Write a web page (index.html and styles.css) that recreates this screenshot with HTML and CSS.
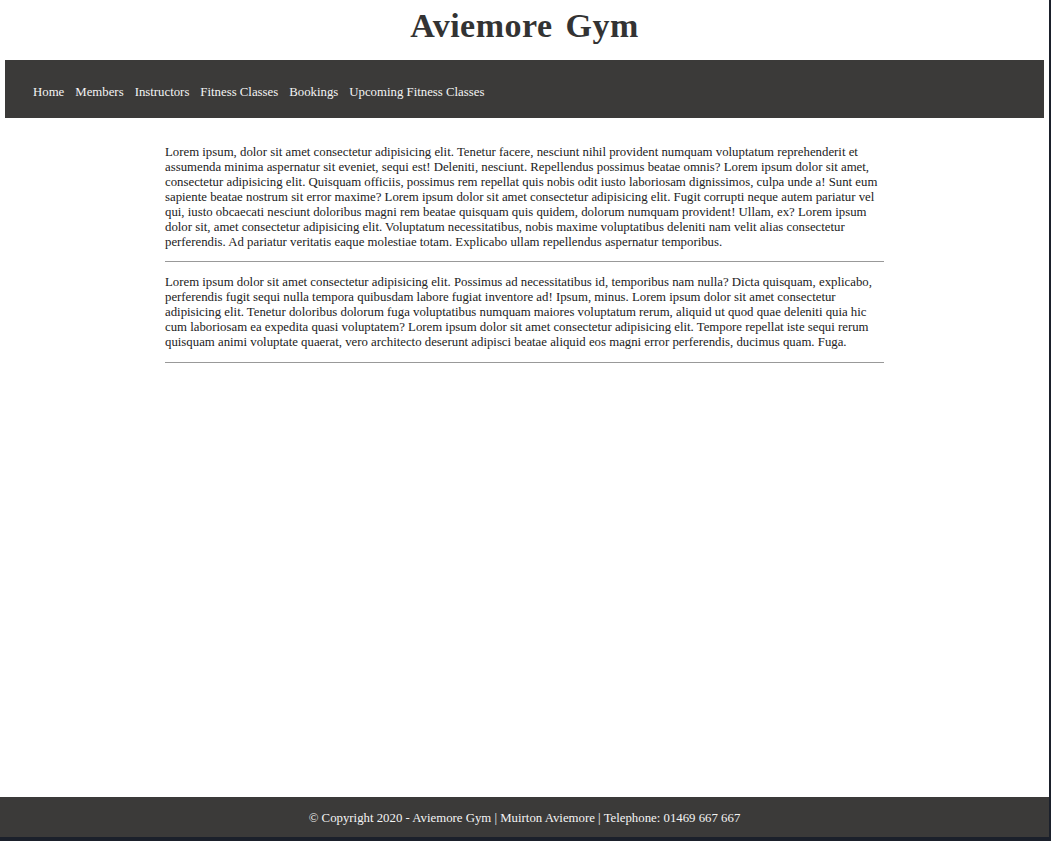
FILE: index.html
```html
<!DOCTYPE html>
<html lang="en">
<head>
<meta charset="utf-8">
<title>Aviemore Gym</title>
<link rel="stylesheet" href="styles.css">
</head>
<body>
<div class="page">
  <header class="site-header">
    <h1 class="site-title">Aviemore Gym</h1>
  </header>
  <nav class="main-nav">
    <a href="#">Home</a>
    <a href="#">Members</a>
    <a href="#">Instructors</a>
    <a href="#">Fitness Classes</a>
    <a href="#">Bookings</a>
    <a href="#">Upcoming Fitness Classes</a>
  </nav>
  <main class="content">
    <p>Lorem ipsum, dolor sit amet consectetur adipisicing elit. Tenetur facere, nesciunt nihil provident numquam voluptatum reprehenderit et assumenda minima aspernatur sit eveniet, sequi est! Deleniti, nesciunt. Repellendus possimus beatae omnis? Lorem ipsum dolor sit amet, consectetur adipisicing elit. Quisquam officiis, possimus rem repellat quis nobis odit iusto laboriosam dignissimos, culpa unde a! Sunt eum sapiente beatae nostrum sit error maxime? Lorem ipsum dolor sit amet consectetur adipisicing elit. Fugit corrupti neque autem pariatur vel qui, iusto obcaecati nesciunt doloribus magni rem beatae quisquam quis quidem, dolorum numquam provident! Ullam, ex? Lorem ipsum dolor sit, amet consectetur adipisicing elit. Voluptatum necessitatibus, nobis maxime voluptatibus deleniti nam velit alias consectetur perferendis. Ad pariatur veritatis eaque molestiae totam. Explicabo ullam repellendus aspernatur temporibus.</p>
    <hr class="divider">
    <p>Lorem ipsum dolor sit amet consectetur adipisicing elit. Possimus ad necessitatibus id, temporibus nam nulla? Dicta quisquam, explicabo, perferendis fugit sequi nulla tempora quibusdam labore fugiat inventore ad! Ipsum, minus. Lorem ipsum dolor sit amet consectetur adipisicing elit. Tenetur doloribus dolorum fuga voluptatibus numquam maiores voluptatum rerum, aliquid ut quod quae deleniti quia hic cum laboriosam ea expedita quasi voluptatem? Lorem ipsum dolor sit amet consectetur adipisicing elit. Tempore repellat iste sequi rerum quisquam animi voluptate quaerat, vero architecto deserunt adipisci beatae aliquid eos magni error perferendis, ducimus quam. Fuga.</p>
    <hr class="divider divider-end">
  </main>
  <footer class="site-footer">
    <p>&copy; Copyright 2020 - Aviemore Gym | Muirton Aviemore | Telephone: 01469 667 667</p>
  </footer>
</div>
</body>
</html>
```
FILE: styles.css
```css
html {
  background: #1b202b;
  height: 100%;
}
body {
  margin: 0;
  font-family: "Liberation Serif", "Times New Roman", serif;
  font-size: 12.8px;
  line-height: 15px;
  color: #222;
}
.page {
  width: 1049px;
  height: 837px;
  background: #fff;
  display: flex;
  flex-direction: column;
}
.site-header {
  height: 60px;
  display: flex;
  justify-content: center;
  align-items: center;
}
.site-title {
  margin: 0;
  font-size: 34px;
  line-height: 40px;
  font-weight: bold;
  letter-spacing: 0.5px;
  word-spacing: 4px;
  color: #333;
  padding-bottom: 8px;
}
.main-nav {
  margin: 0 5px;
  height: 58px;
  background: #3b3a39;
  display: flex;
  align-items: center;
  gap: 11px;
  padding-left: 28px;
}
.main-nav a {
  color: #f4f4f4;
  text-decoration: none;
  font-size: 12.8px;
  padding-top: 7px;
}
.content {
  flex: 1;
  width: 719px;
  margin: 0 auto;
  padding-top: 27px;
}
.content p {
  margin: 0;
}
.divider {
  margin: 11px 0 13px;
  border: 0;
  border-top: 1px solid #999;
  height: 0;
}
.divider-end {
  margin-top: 12px;
}
.site-footer {
  height: 40px;
  background: #3b3a39;
  display: flex;
  align-items: center;
  justify-content: center;
}
.site-footer p {
  margin: 0;
  color: #f4f4f4;
  font-size: 12.8px;
  padding-top: 2px;
}
```
